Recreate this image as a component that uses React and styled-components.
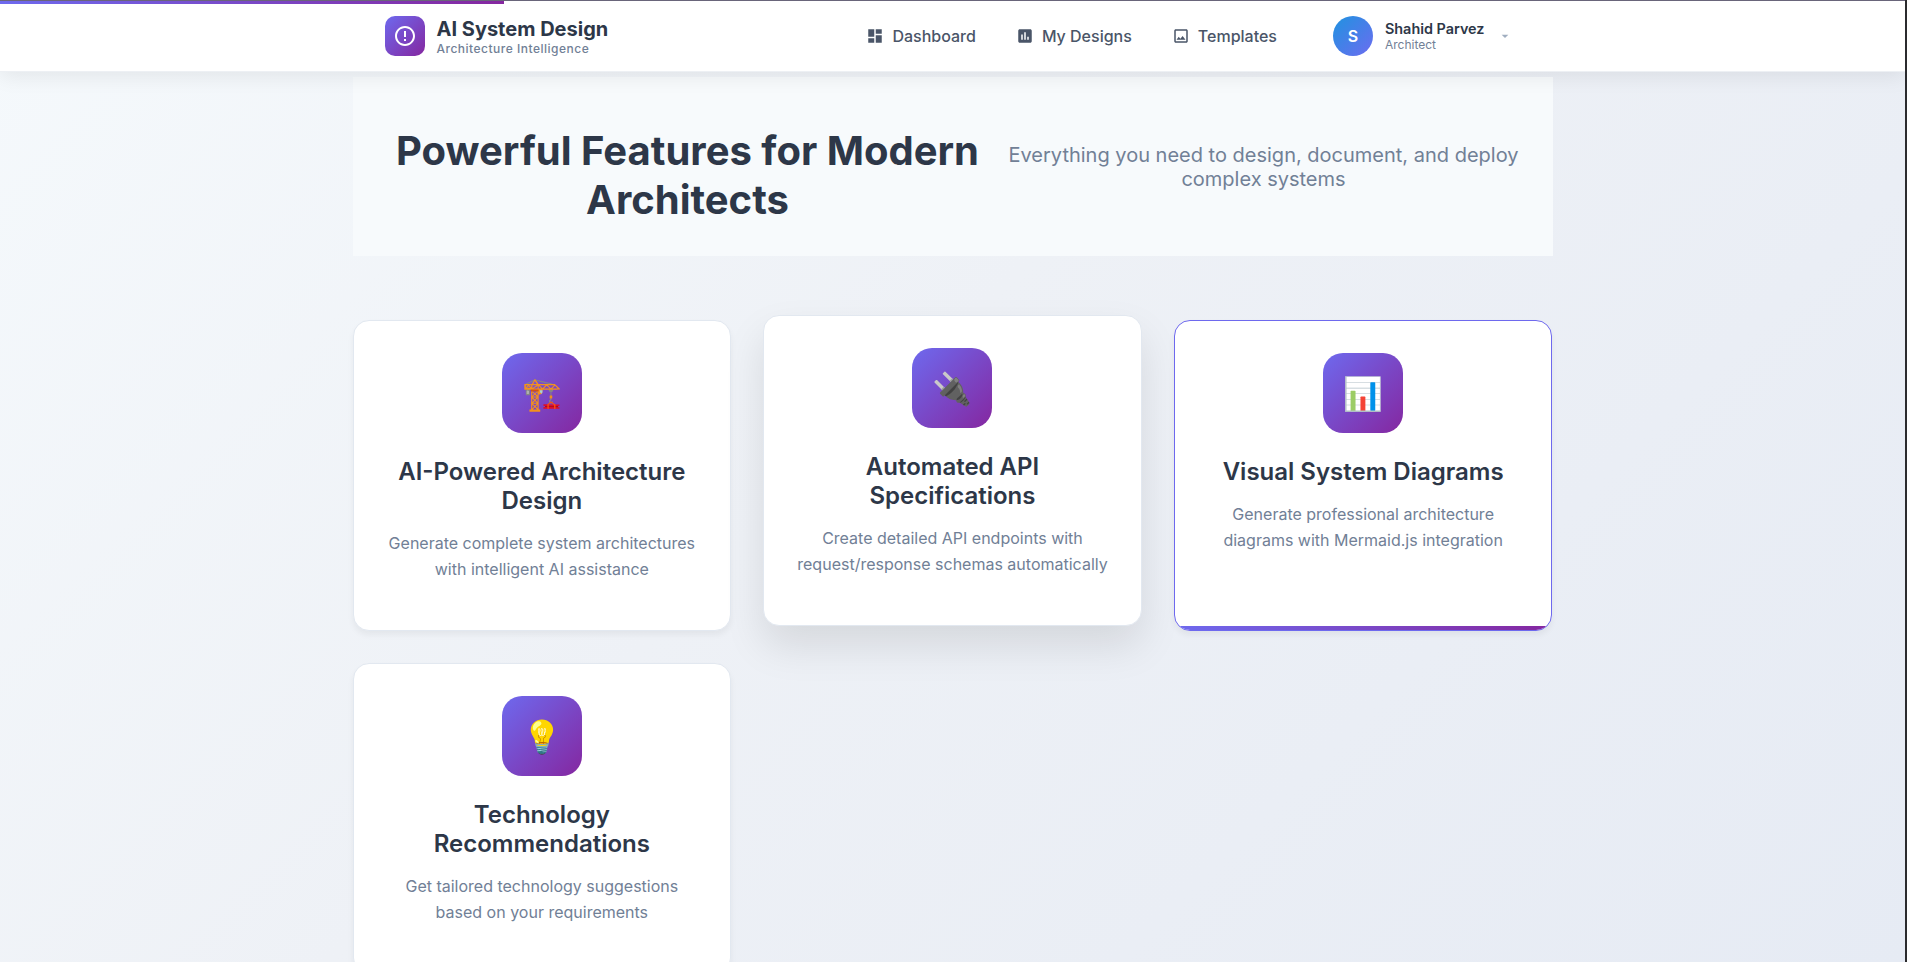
import React from "react";
import styled, { createGlobalStyle } from "styled-components";
import {
  MdDashboard,
  MdAssessment,
  MdOutlineImage,
  MdErrorOutline,
  MdArrowDropDown,
} from "react-icons/md";

const brandGradient = "linear-gradient(135deg, #6e69ee 0%, #8527a0 100%)";

const GlobalStyle = createGlobalStyle`
  *, *::before, *::after { box-sizing: border-box; }
  html { background: #2b2b2e; }
  body {
    margin: 0;
    height: 100vh;
    overflow: hidden;
    font-family: Inter, "Liberation Sans", sans-serif;
    color: #2d3748;
  }
  h1, h2, h3, p { margin: 0; }
`;

const Page = styled.div`
  display: flex;
  flex-direction: column;
  height: 100vh;
  margin-right: 2px;
  overflow: hidden;
  background: linear-gradient(135deg, #f5f9fc 0%, #eef1f6 45%, #e6ebf4 100%);
`;

const Header = styled.header`
  position: relative;
  z-index: 2;
  flex: none;
  height: 72px;
  border-top: 1px solid #69657a;
  border-bottom: 1px solid #edf0f4;
  background: #fff;
  box-shadow: 0 4px 20px rgba(0, 0, 0, 0.08);
`;

const Progress = styled.div`
  position: absolute;
  top: 0;
  left: 0;
  width: 504px;
  height: 3px;
  background: linear-gradient(90deg, #6e69ee, #8527a0);
`;

const HeaderInner = styled.div`
  display: flex;
  align-items: center;
  width: 1200px;
  height: 70px;
  margin: 0 auto;
  padding: 0 32px;
`;

const Brand = styled.div`
  display: flex;
  align-items: center;
  gap: 12px;
`;

const BrandMark = styled.div`
  display: grid;
  place-items: center;
  width: 40px;
  height: 40px;
  border-radius: 10px;
  background: ${brandGradient};
  color: #fff;
  font-size: 24px;
`;

const BrandName = styled.div`
  font-size: 20px;
  font-weight: 700;
  line-height: 24px;
`;

const BrandTag = styled.div`
  color: #718096;
  font-size: 12px;
  font-weight: 500;
  line-height: 15px;
  letter-spacing: 0.5px;
`;

const Nav = styled.nav`
  display: flex;
  gap: 40px;
  margin-left: auto;
`;

const NavItem = styled.a`
  display: flex;
  align-items: center;
  gap: 8px;
  color: #4a5568;
  font-size: 16px;
  font-weight: 500;
  line-height: 20px;

  svg { font-size: 18px; }
`;

const User = styled.div`
  display: flex;
  align-items: center;
  gap: 12px;
  margin-left: 56px;
  margin-right: 8px;

  > svg { color: #a0aec0; font-size: 16px; }
`;

const Avatar = styled.div`
  display: grid;
  place-items: center;
  width: 40px;
  height: 40px;
  border-radius: 50%;
  background: linear-gradient(135deg, #1f93e0, #6c6cf0);
  color: #fff;
  font-size: 16px;
  font-weight: 600;
`;

const UserName = styled.div`
  font-size: 14.4px;
  font-weight: 600;
  line-height: 17px;
`;

const UserRole = styled.div`
  color: #718096;
  font-size: 12px;
  line-height: 15px;
`;

const Main = styled.main`
  flex: none;
  width: 1200px;
  margin: 5px auto 0;
`;

const Intro = styled.section`
  display: flex;
  gap: 16px;
  height: 179px;
  padding: 49px 31px 0 33px;
  background: #f7fafc;
  text-align: center;
`;

const IntroTitle = styled.h1`
  width: 604px;
  font-size: 40px;
  font-weight: 700;
  line-height: 49px;
`;

const IntroText = styled.p`
  width: 516px;
  padding-top: 17px;
  color: #718096;
  font-size: 20px;
  line-height: 24px;
`;

const Features = styled.section`
  display: grid;
  grid-template-columns: repeat(3, 1fr);
  gap: 32px;
  margin-top: 64px;
`;

const Card = styled.article`
  position: relative;
  display: flex;
  flex-direction: column;
  align-items: center;
  height: 311px;
  padding: 32px;
  overflow: hidden;
  border: 1px solid ${(p) => (p.$state === "active" ? "#6e69ee" : "#e2e8f0")};
  border-radius: 16px;
  background: #fff;
  box-shadow: ${(p) =>
    p.$state === "raised"
      ? "0 20px 40px rgba(0, 0, 0, 0.1)"
      : "0 4px 6px rgba(0, 0, 0, 0.05)"};
  transform: ${(p) => (p.$state === "raised" ? "translateY(-5px)" : "none")};
  text-align: center;

  &::after {
    content: "";
    display: ${(p) => (p.$state === "active" ? "block" : "none")};
    position: absolute;
    bottom: 0;
    left: 0;
    width: 100%;
    height: 4px;
    background: linear-gradient(90deg, #6e69ee, #8527a0);
  }
`;

const CardIcon = styled.div`
  display: grid;
  flex: none;
  place-items: center;
  width: 80px;
  height: 80px;
  margin-bottom: 24px;
  border-radius: 20px;
  background: ${brandGradient};
  font-size: 32px;
`;

const CardTitle = styled.h2`
  margin-bottom: 16px;
  font-size: 24px;
  font-weight: 600;
  line-height: 29px;
`;

const CardText = styled.p`
  color: #718096;
  font-size: 16px;
  line-height: 25.6px;
`;

const navItems = [
  { label: "Dashboard", Icon: MdDashboard },
  { label: "My Designs", Icon: MdAssessment },
  { label: "Templates", Icon: MdOutlineImage },
];

const features = [
  {
    icon: "🏗️",
    title: "AI-Powered Architecture Design",
    text: "Generate complete system architectures with intelligent AI assistance",
  },
  {
    icon: "🔌",
    title: "Automated API Specifications",
    text: "Create detailed API endpoints with request/response schemas automatically",
    state: "raised",
  },
  {
    icon: "📊",
    title: "Visual System Diagrams",
    text: "Generate professional architecture diagrams with Mermaid.js integration",
    state: "active",
  },
  {
    icon: "💡",
    title: "Technology Recommendations",
    text: "Get tailored technology suggestions based on your requirements",
  },
];

export default function App() {
  return (
    <>
      <GlobalStyle />
      <Page>
        <Header>
          <Progress />
          <HeaderInner>
            <Brand>
              <BrandMark>
                <MdErrorOutline />
              </BrandMark>
              <div>
                <BrandName>AI System Design</BrandName>
                <BrandTag>Architecture Intelligence</BrandTag>
              </div>
            </Brand>
            <Nav>
              {navItems.map(({ label, Icon }) => (
                <NavItem key={label}>
                  <Icon />
                  {label}
                </NavItem>
              ))}
            </Nav>
            <User>
              <Avatar>S</Avatar>
              <div>
                <UserName>Shahid Parvez</UserName>
                <UserRole>Architect</UserRole>
              </div>
              <MdArrowDropDown />
            </User>
          </HeaderInner>
        </Header>
        <Main>
          <Intro>
            <IntroTitle>Powerful Features for Modern Architects</IntroTitle>
            <IntroText>
              Everything you need to design, document, and deploy complex systems
            </IntroText>
          </Intro>
          <Features>
            {features.map((f) => (
              <Card key={f.title} $state={f.state}>
                <CardIcon>{f.icon}</CardIcon>
                <CardTitle>{f.title}</CardTitle>
                <CardText>{f.text}</CardText>
              </Card>
            ))}
          </Features>
        </Main>
      </Page>
    </>
  );
}
